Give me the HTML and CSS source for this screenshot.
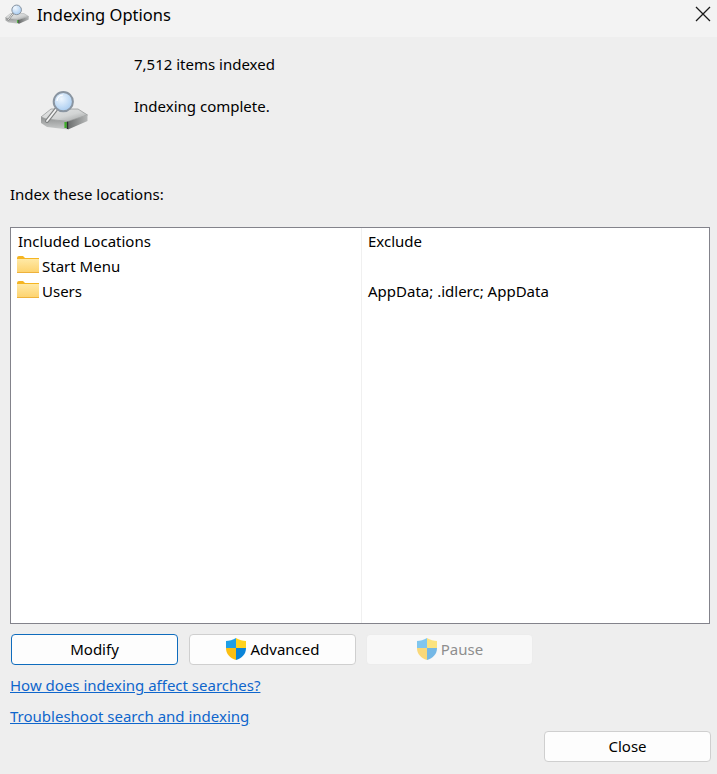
FILE: index.html
```html
<!DOCTYPE html>
<html lang="en">
<head>
    <meta charset="UTF-8">
    <title>Indexing Options</title>
    <link rel="stylesheet" href="styles.css">
</head>
<body>
    <svg class="defs" width="0" height="0">
        <defs>
            <linearGradient id="driveTop" x1="0" y1="0" x2="1" y2="1">
                <stop offset="0" stop-color="#e6e7e7"/>
                <stop offset="0.55" stop-color="#d2d4d4"/>
                <stop offset="1" stop-color="#9a9c9c"/>
            </linearGradient>
            <linearGradient id="driveFront" x1="0" y1="0" x2="0" y2="1">
                <stop offset="0" stop-color="#8f9191"/>
                <stop offset="1" stop-color="#c9cbcb"/>
            </linearGradient>
            <linearGradient id="driveSide" x1="0" y1="0" x2="1" y2="0">
                <stop offset="0" stop-color="#6c6e6e"/>
                <stop offset="1" stop-color="#b6b8b8"/>
            </linearGradient>
            <radialGradient id="lens" cx="0.4" cy="0.35" r="0.75">
                <stop offset="0" stop-color="#eef6fe"/>
                <stop offset="1" stop-color="#9fc6ee"/>
            </radialGradient>
            <linearGradient id="folderFill" x1="0" y1="0" x2="0" y2="1">
                <stop offset="0" stop-color="#ffe9a6"/>
                <stop offset="1" stop-color="#fdd26c"/>
            </linearGradient>
            <symbol id="searchDrive" viewBox="0 0 48 40">
                <path d="M1 27 L11 19 H38 L47.5 25 L28 31.5 L6 29 Z" fill="url(#driveTop)" stroke="#8e9090" stroke-width="0.7"/>
                <path d="M1 27 L6 29 L28 31.5 V39.5 L7 37 L1 33 Z" fill="url(#driveFront)"/>
                <path d="M28 31.5 L47.5 25 V31 L28 39.5 Z" fill="url(#driveSide)"/>
                <rect x="24.4" y="32" width="2.4" height="6" fill="#3fae2a"/>
                <rect x="26.8" y="31.6" width="1.4" height="7.4" fill="#2c2e2e"/>
                <path d="M7 31 L16 19.5" stroke="#7e8080" stroke-width="4" stroke-linecap="round"/>
                <path d="M7 31 L16 19.5" stroke="#f4f4f4" stroke-width="1.8" stroke-linecap="round"/>
                <circle cx="23.3" cy="11.7" r="9.6" fill="url(#lens)" stroke="#8a95a1" stroke-width="2"/>
                <path d="M17 11 A6.5 6.5 0 0 1 23 5" stroke="#ffffff" stroke-width="1.2" fill="none"/>
            </symbol>
            <symbol id="shield" viewBox="0 0 22 24">
                <path d="M11 1 C8 3 4 4 1 4 V11 H11 Z" fill="#1f9fe6"/>
                <path d="M11 1 C14 3 18 4 21 4 V11 H11 Z" fill="#ffd21e"/>
                <path d="M1 11 H11 V23 C5 21 1 17 1 11 Z" fill="#fbbf12"/>
                <path d="M21 11 H11 V23 C17 21 21 17 21 11 Z" fill="#0a84d8"/>
            </symbol>
            <symbol id="folder" viewBox="0 0 22 17">
                <path d="M0 2 Q0 0 2 0 H6 L8 2 H22 V17 H0 Z" fill="#f5b522"/>
                <rect x="0" y="3" width="22" height="14" fill="url(#folderFill)"/>
                <path d="M0 16.5 H22" stroke="#eeb23c" stroke-width="1"/>
            </symbol>
        </defs>
    </svg>

    <div class="dialog">
        <div class="title-bar">
            <svg class="title-icon"><use href="#searchDrive"/></svg>
            <span class="title-text">Indexing Options</span>
            <svg class="close-x" viewBox="0 0 16 16">
                <path d="M1 1 L15 15 M15 1 L1 15" stroke="#1a1a1a" stroke-width="1.3" fill="none"/>
            </svg>
        </div>

        <div class="content">
            <div class="status">
                <svg class="status-icon"><use href="#searchDrive"/></svg>
                <div class="status-text">
                    <div>7,512 items indexed</div>
                    <div>Indexing complete.</div>
                </div>
            </div>

            <div class="locations-label">Index these locations:</div>

            <div class="locations">
                <div class="col col-included">
                    <div class="row head">Included Locations</div>
                    <div class="row"><svg class="folder-icon"><use href="#folder"/></svg>Start Menu</div>
                    <div class="row"><svg class="folder-icon"><use href="#folder"/></svg>Users</div>
                </div>
                <div class="col col-exclude">
                    <div class="row head">Exclude</div>
                    <div class="row"></div>
                    <div class="row">AppData; .idlerc; AppData</div>
                </div>
            </div>

            <div class="buttons">
                <button class="btn btn-focus">Modify</button>
                <button class="btn"><svg class="shield-icon"><use href="#shield"/></svg>Advanced</button>
                <button class="btn btn-disabled"><svg class="shield-icon"><use href="#shield"/></svg>Pause</button>
            </div>

            <a class="link link-first" href="#">How does indexing affect searches?</a>
            <a class="link" href="#">Troubleshoot search and indexing</a>

            <div class="footer">
                <button class="btn">Close</button>
            </div>
        </div>
    </div>
</body>
</html>
```

FILE: styles.css
```css
body {
    margin: 0;
    background-color: #eeeeee;
    font-family: "Noto Sans", sans-serif;
    font-size: 15px;
    color: #000;
}
.defs {
    position: absolute;
}
.dialog {
    width: 717px;
    height: 774px;
    overflow: hidden;
}
.title-bar {
    height: 28px;
    background-color: #f3f3f3;
    display: flex;
    align-items: center;
    padding: 0 6px 9px 5px;
}
.title-icon {
    width: 24px;
    height: 20px;
    margin-right: 8px;
}
.title-text {
    flex-grow: 1;
    font-size: 16.5px;
}
.close-x {
    width: 16px;
    height: 16px;
}
.content {
    padding: 0 6px 0 10px;
}
.status {
    display: flex;
    height: 137px;
}
.status-icon {
    width: 48px;
    height: 40px;
    margin: 53px 46px 0 30px;
}
.status-text {
    padding-top: 16px;
}
.status-text div {
    height: 42px;
    line-height: 22px;
}
.locations-label {
    height: 20px;
    line-height: 20px;
    margin-top: 10px;
    margin-bottom: 23px;
}
.locations {
    width: 698px;
    height: 395px;
    margin-right: 9px;
    background-color: #fff;
    border: 1px solid #83838b;
    display: flex;
}
.col {
    padding-top: 1px;
}
.col-included {
    width: 350px;
    border-right: 1px solid #f0f0f0;
}
.col-exclude {
    flex-grow: 1;
}
.row {
    height: 25px;
    line-height: 25px;
    display: flex;
    align-items: center;
    padding-left: 6px;
    white-space: nowrap;
}
.col-included .row {
    padding-left: 7px;
}
.folder-icon {
    width: 22px;
    height: 17px;
    margin-left: -1px;
    margin-right: 3px;
    margin-top: -4px;
}
.buttons {
    display: flex;
    gap: 11px;
    margin-top: 10px;
    margin-left: 1px;
}
.btn {
    width: 167px;
    height: 31px;
    padding: 0 0 2px;
    font-family: inherit;
    font-size: 15px;
    color: #000;
    background-color: #fdfdfd;
    border: 1px solid #cfcfcf;
    border-radius: 4px;
    display: flex;
    justify-content: center;
    align-items: center;
}
.btn-focus {
    border-color: #0f6cbd;
}
.btn-disabled {
    margin-left: -1px;
    color: #8e8e8e;
    background-color: #f8f8f8;
    border-color: #ececec;
}
.btn-disabled .shield-icon {
    opacity: 0.55;
}
.shield-icon {
    width: 22px;
    height: 24px;
    margin-right: 3px;
}
.link {
    display: block;
    height: 31px;
    line-height: 22px;
    color: #0f66cc;
    width: max-content;
}
.link-first {
    margin-top: 9px;
}
.footer {
    display: flex;
    justify-content: flex-end;
    margin-top: -5px;
}
```
